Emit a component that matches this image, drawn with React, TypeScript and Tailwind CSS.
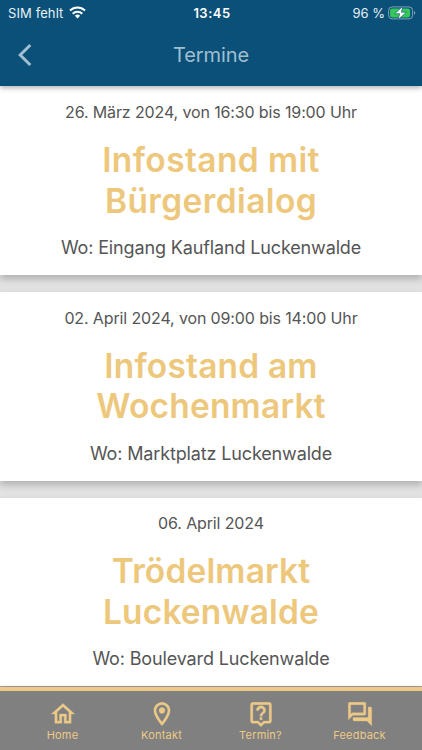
import React from "react";

const events = [
  { date: "26. März 2024, von 16:30 bis 19:00 Uhr", title: ["Infostand mit", "Bürgerdialog"], place: "Wo: Eingang Kaufland Luckenwalde", tracking: "tracking-[0.38px]" },
  { date: "02. April 2024, von 09:00 bis 14:00 Uhr", title: ["Infostand am", "Wochenmarkt"], place: "Wo: Marktplatz Luckenwalde", tracking: "tracking-[0.18px]" },
  { date: "06. April 2024", title: ["Trödelmarkt", "Luckenwalde"], place: "Wo: Boulevard Luckenwalde", tracking: "tracking-[0.15px]" },
];

const tabs = [
  {
    label: "Home",
    icon: <path d="M12 5.69l5 4.5V18h-2v-6H9v6H7v-7.81l5-4.5M12 3L2 12h3v8h6v-6h2v6h6v-8h3L12 3z" />,
  },
  {
    label: "Kontakt",
    icon: (
      <>
        <path d="M12 2C8.13 2 5 5.13 5 9c0 5.25 7 13 7 13s7-7.75 7-13c0-3.87-3.13-7-7-7zM7 9c0-2.76 2.24-5 5-5s5 2.24 5 5c0 2.88-2.88 7.19-5 9.88C9.92 16.21 7 11.85 7 9z" />
        <circle cx="12" cy="9" r="2.5" />
      </>
    ),
  },
  {
    label: "Termin?",
    icon: <path d="M19 2H5c-1.11 0-2 .9-2 2v14c0 1.1.89 2 2 2h4l3 3 3-3h4c1.1 0 2-.9 2-2V4c0-1.1-.9-2-2-2zm0 16h-4.83l-.59.59L12 20.17l-1.59-1.59-.58-.58H5V4h14v14zm-8-3h2v2h-2zm1-8c1.1 0 2 .9 2 2 0 2-3 1.75-3 5h2c0-2.25 3-2.5 3-5 0-2.21-1.79-4-4-4S8 6.79 8 9h2c0-1.1.9-2 2-2z" />,
  },
  {
    label: "Feedback",
    icon: <path d="M15 4v7H5.17L4 12.17V4h11m1-2H3c-.55 0-1 .45-1 1v14l4-4h10c.55 0 1-.45 1-1V3c0-.55-.45-1-1-1zm5 4h-2v9H6v2c0 .55.45 1 1 1h11l4 4V7c0-.55-.45-1-1-1z" />,
  },
];

function StatusBar() {
  return (
    <div className="grid h-[26px] grid-cols-3 items-center pl-2 pr-[6px] text-[13px] leading-[26px] text-[#e8f1f6]">
      <div className="flex items-center gap-[6px]">
        <span className="tracking-[0.1px]">SIM fehlt</span>
        <svg className="-mt-px" width="17" height="13" viewBox="0 0 17 13" fill="none" stroke="#fff" strokeWidth="2.1">
          <path d="M1 4.6a10.6 10.6 0 0 1 15 0" />
          <path d="M3.7 7.7a6.8 6.8 0 0 1 9.6 0" />
          <path d="M8.5 12.4 5.9 9.8a3.7 3.7 0 0 1 5.2 0z" fill="#fff" stroke="none" />
        </svg>
      </div>
      <span className="text-center font-semibold tracking-[0.5px] text-white">13:45</span>
      <div className="flex items-center justify-end gap-[3px]">
        <span className="whitespace-nowrap">96 %</span>
        <svg className="-mt-px" width="28" height="14" viewBox="0 0 28 14">
          <rect x="0.6" y="0.9" width="24" height="12" rx="3.6" fill="none" stroke="#7fa5bb" />
          <rect x="2.1" y="2.4" width="20" height="9" rx="2.2" fill="#35c759" />
          <path d="M26 5c1.7.5 1.7 3.3 0 3.9z" fill="#7fa5bb" />
          <path d="M14.8.3 6.8 7.7h4.9L10.2 13.5l8.1-7.3h-4.9z" fill="#fff" stroke="#0a5078" strokeWidth=".6" />
        </svg>
      </div>
    </div>
  );
}

export default function App() {
  return (
    <div className="flex h-[750px] w-[422px] flex-col overflow-hidden bg-[#e2e2e2] font-['Inter',sans-serif]">
      <header className="z-10 h-[86px] shrink-0 bg-[#0a5078] shadow-[0_2px_5px_rgba(0,0,0,0.3)]">
        <StatusBar />
        <div className="grid h-[58px] grid-cols-[60px_1fr_60px] items-center text-[#a0bfd2]">
          <svg className="ml-[18px]" width="14" height="24" viewBox="0 0 14 24" fill="none" stroke="currentColor" strokeWidth="3">
            <path d="M12.3 2 2.2 12l10.1 10" />
          </svg>
          <h1 className="text-center text-[20px] leading-[26px] tracking-[-0.1px]">Termine</h1>
        </div>
      </header>
      <main className="flex min-h-0 flex-1 flex-col gap-[17px] overflow-hidden">
        {events.map((e) => (
          <article key={e.date} className="h-[188.8px] shrink-0 bg-white pt-[14px] text-center text-[#555555] shadow-[0_4px_7px_rgba(0,0,0,0.22)] last:pt-[13.5px]">
            <p className="text-[16px] leading-[24px] tracking-[-0.13px]">{e.date}</p>
            <h2 className={`mt-[16px] text-[33.5px] font-semibold leading-[40.5px] text-[#edc87c] ${e.tracking}`}>
              {e.title[0]}<br />{e.title[1]}
            </h2>
            <p className="mt-[14px] text-[18px] leading-[26px] tracking-[-0.14px]">{e.place}</p>
          </article>
        ))}
      </main>
      <nav className="z-10 grid h-[63px] shrink-0 grid-cols-4 border-t-4 border-[#edc987] bg-[#808080] px-[13px] text-[#edc987] shadow-[0_-1px_1px_rgba(0,0,0,0.2)]">
        {tabs.map(({ label, icon }) => (
          <div key={label} className="flex flex-col items-center pt-[9px]">
            <svg width="28" height="28" viewBox="0 0 24 24" fill="currentColor" stroke="currentColor" strokeWidth="0.25">
              {icon}
            </svg>
            <span className="text-[11px] leading-[14px] tracking-[0.2px]">{label}</span>
          </div>
        ))}
      </nav>
    </div>
  );
}
